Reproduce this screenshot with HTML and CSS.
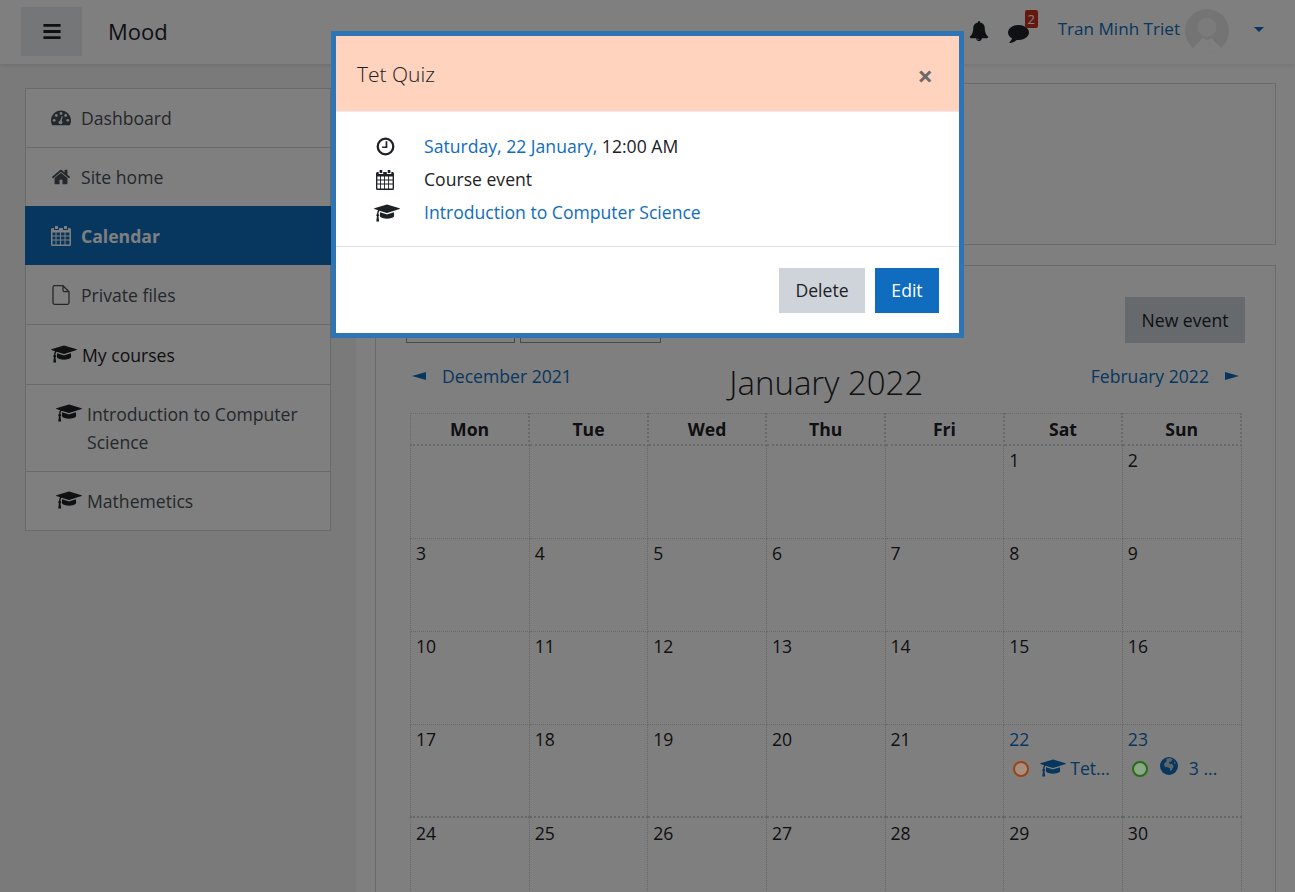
FILE: index.html
```html
<!DOCTYPE html>
<html lang="en">
<head>
<meta charset="utf-8">
<title>Calendar</title>
<link rel="stylesheet" href="styles.css">
</head>
<body>
<svg class="defs" width="0" height="0" aria-hidden="true">
  <symbol id="cap" viewBox="0 0 2304 1792"><path d="M1774 836l18 316q4 69-82 128t-235 93.5-323 34.5-323-34.5-235-93.5-82-128l18-316 574 181q22 7 48 7t48-7zm530-324q0 23-22 31l-1120 352q-4 1-10 1t-10-1l-652-206q-43 34-71 111.5t-34 178.5q63 36 63 109 0 69-58 107l58 433q2 14-8 25-9 11-24 11h-192q-15 0-24-11-10-11-8-25l58-433q-58-38-58-107 0-73 65-111 11-207 98-330l-333-104q-22-8-22-31t22-31l1120-352q4-1 10-1t10 1l1120 352q22 8 22 31z"/></symbol>
  <symbol id="cal" viewBox="0 0 20 20" preserveAspectRatio="none"><path fill-rule="evenodd" d="M4 0h3v3H4zM13 0h3v3h-3zM2 2h1v2h5V2h4v2h5V2h1.500A1.500 1.500 0 0 1 20 3.500v15a1.500 1.500 0 0 1-1.500 1.500h-17A1.500 1.500 0 0 1 0 18.500v-15A1.500 1.500 0 0 1 1.500 2zM1.500 6.500v3h3v-3zM5.500 6.500v3h3.500v-3zM10 6.500v3h3.500v-3zM14.500 6.500v3h4v-3zM1.500 10.500v3h3v-3zM5.500 10.500v3h3.500v-3zM10 10.500v3h3.500v-3zM14.500 10.500v3h4v-3zM1.500 14.500v4h3v-4zM5.500 14.500v4h3.500v-4zM10 14.500v4h3.500v-4zM14.500 14.500v4h4v-4z"/></symbol>
</svg>

<header class="topbar">
  <button class="burger" type="button" aria-label="Menu">
    <svg class="burger-ico" viewBox="0 0 16 14"><path d="M0 0h16v2.600H0zM0 5.700h16v2.600H0zM0 11.400h16V14H0z"/></svg>
  </button>
  <span class="brand">Mood</span>
  <div class="usernav">
    <svg class="ico-bell" viewBox="0 0 1792 1792"><path d="M912 1696q0-16-16-16-59 0-101.500-42.500t-42.500-101.500q0-16-16-16t-16 16q0 73 51.500 124.500t124.500 51.500q16 0 16-16zm816-288q0 52-38 90t-90 38h-448q0 106-75 181t-181 75-181-75-75-181h-448q-52 0-90-38t-38-90q50-42 91-88t85-119.500 74.500-158.500 50-206 19.500-260q0-152 117-282.500t307-158.500q-8-19-8-39 0-40 28-68t68-28 68 28 28 68q0 20-8 39 190 28 307 158.500t117 282.500q0 139 19.500 260t50 206 74.500 158.500 85 119.500 91 88z"/></svg>
    <span class="msg">
      <svg class="ico-msg" viewBox="0 0 1792 1792"><path d="M1792 896q0 174-120 321.500t-326 233-450 85.500q-70 0-145-8-198 175-460 242-49 14-114 22-17 2-30.500-9t-17.500-29v-1q-3-4-.5-12t2-10 4.500-9.500l6-9 7-8.500 8-9q7-8 31-34.500t34.500-38 31-39.500 32.500-51 27-59 26-76q-157-89-247.500-220t-90.500-281q0-130 71-248.500t191-204.500 286-136.500 348-50.500q244 0 450 85.500t326 233 120 321.500z"/></svg>
      <span class="badge">2</span>
    </span>
    <a class="username">Tran Minh Triet</a>
    <svg class="avatar" viewBox="0 0 44 44"><clipPath id="av"><circle cx="22" cy="22" r="22"/></clipPath><g clip-path="url(#av)"><rect width="44" height="44" fill="#e8e8e8"/><circle cx="22" cy="18" r="9.500" fill="#f6f6f6"/><path fill="#fff" d="M0 44V39h8c3-4 7-6 9-10l5 2 5-2c2 4 6 6 9 10h8v5z"/></g></svg>
    <span class="caret"></span>
  </div>
</header>

<div class="page">
  <aside class="side">
    <nav class="menu">
      <a class="item">
        <svg class="mi" viewBox="0 0 20 20"><path d="M10 2.500C4.500 2.500 0 7 0 12.500c0 1.700.4 3.300 1.200 4.800h17.600c.8-1.500 1.200-3.100 1.200-4.800 0-5.500-4.500-10-10-10z"/><g fill="#f4f4f4"><circle cx="3.200" cy="12.300" r="1.400"/><circle cx="5.300" cy="7.500" r="1.400"/><circle cx="10" cy="5.500" r="1.400"/><circle cx="14.700" cy="7.500" r="1.400"/><circle cx="16.800" cy="12.300" r="1.400"/><circle cx="9.500" cy="14.300" r="1.900"/><path d="M9 13l1.800-5 1 .4-1.300 5z"/></g></svg>
        <span>Dashboard</span>
      </a>
      <a class="item">
        <svg class="mi" viewBox="0 0 1792 1792"><path d="M1472 992v480q0 26-19 45t-45 19h-384v-384h-256v384h-384q-26 0-45-19t-19-45v-480q0-1 .5-3t.5-3l575-474 575 474q1 2 1 6zm223-69l-62 74q-8 9-21 11h-3q-13 0-21-7l-692-577-692 577q-12 8-24 7-13-2-21-11l-62-74q-8-10-7-23.500t11-21.500l719-599q32-26 76-26t76 26l244 204v-195q0-14 9-23t23-9h192q14 0 23 9t9 23v408l219 182q10 8 11 21.500t-7 23.500z"/></svg>
        <span>Site home</span>
      </a>
      <a class="item active">
        <svg class="mi"><use href="#cal"/></svg>
        <span>Calendar</span>
      </a>
      <a class="item tall">
        <svg class="mi" viewBox="0 0 20 20"><path fill="none" stroke="currentColor" stroke-width="1.300" d="M12 .7H3.500A1.500 1.500 0 0 0 2 2.200v15.600a1.500 1.500 0 0 0 1.500 1.500h13a1.500 1.500 0 0 0 1.500-1.500V6.700zM12 .7v4.500a1.500 1.500 0 0 0 1.500 1.500H18"/></svg>
        <span>Private files</span>
      </a>
      <a class="item tall dark">
        <svg class="mi cap"><use href="#cap"/></svg>
        <span>My courses</span>
      </a>
      <a class="item sub">
        <svg class="mi cap"><use href="#cap"/></svg>
        <span>Introduction to Computer Science</span>
      </a>
      <a class="item sub">
        <svg class="mi cap"><use href="#cap"/></svg>
        <span>Mathemetics</span>
      </a>
    </nav>
  </aside>

  <main class="main">
    <section class="card summary"></section>
    <section class="card cal">
      <div class="toolbar">
        <div class="selects">
          <span class="sel sel-a"></span>
          <span class="sel sel-b"></span>
        </div>
        <span class="newbtn">New event</span>
      </div>
      <div class="calnav">
        <a class="prev"><span class="tri tri-l"></span>December 2021</a>
        <h2 class="month">January 2022</h2>
        <a class="next">February 2022<span class="tri tri-r"></span></a>
      </div>
      <table class="grid">
        <thead><tr><th>Mon</th><th>Tue</th><th>Wed</th><th>Thu</th><th>Fri</th><th>Sat</th><th>Sun</th></tr></thead>
        <tbody>
          <tr><td></td><td></td><td></td><td></td><td></td><td>1</td><td>2</td></tr>
          <tr><td>3</td><td>4</td><td>5</td><td>6</td><td>7</td><td>8</td><td>9</td></tr>
          <tr><td>10</td><td>11</td><td>12</td><td>13</td><td>14</td><td>15</td><td>16</td></tr>
          <tr><td>17</td><td>18</td><td>19</td><td>20</td><td>21</td>
            <td><a class="day">22</a>
              <div class="ev"><span class="dot dot-o"></span><svg class="evi"><use href="#cap"/></svg><a>Tet...</a></div>
            </td>
            <td><a class="day">23</a>
              <div class="ev"><span class="dot dot-g"></span><svg class="evg" viewBox="0 0 20 20"><circle cx="10" cy="10" r="10"/><path fill="#b9cad9" d="M7 2l4.500-1 2.500 1.500-1.500 2.500-2.500.5 1 2.500 2.500-.5 1.500 3-1.500 3.500-2 2-.5-3.500-2.500-1-3-.5-1-2.500 1-2.500 2-1.500zM15.500 4.500l2 2.500-1.500 1z"/></svg><a>3 ...</a></div>
            </td></tr>
          <tr><td>24</td><td>25</td><td>26</td><td>27</td><td>28</td><td>29</td><td>30</td></tr>
        </tbody>
      </table>
    </section>
  </main>
</div>

<div class="backdrop">
  <div class="modal">
    <div class="m-head">
      <h3 class="m-title">Tet Quiz</h3>
      <span class="m-close">×</span>
    </div>
    <div class="m-body">
      <div class="row">
        <svg class="ri ri-clock" viewBox="0 0 20 20"><circle cx="10" cy="10" r="8.200" fill="none" stroke="currentColor" stroke-width="2.400"/><path fill="none" stroke="currentColor" stroke-width="1.800" d="M11 4.500v6.300H6.500"/></svg>
        <span><a>Saturday, 22 January,</a> 12:00 AM</span>
      </div>
      <div class="row">
        <svg class="ri ri-cal"><use href="#cal"/></svg>
        <span>Course event</span>
      </div>
      <div class="row">
        <svg class="ri ri-cap"><use href="#cap"/></svg>
        <a>Introduction to Computer Science</a>
      </div>
    </div>
    <div class="m-foot">
      <span class="btn btn-del">Delete</span>
      <span class="btn btn-edit">Edit</span>
    </div>
  </div>
</div>
</body>
</html>
```
FILE: styles.css
```css
* { box-sizing: border-box; }
html, body { margin: 0; height: 892px; overflow: hidden; }
body {
  background: #fff;
  color: #1d2125;
  font-family: "Open Sans", "Liberation Sans", sans-serif;
  font-size: 17.6px;
  line-height: 1.5;
}
.defs { display: block; height: 0; }
a { color: #0f6cbf; }

.topbar {
  display: flex;
  align-items: center;
  height: 64px;
  padding: 7px 31px 7px 21px;
  background: #fff;
  box-shadow: 0 2px 4px rgba(0,0,0,.08);
  position: relative;
}
.burger {
  width: 61px;
  height: 49px;
  margin-bottom: 1px;
  border: 0;
  background: #e9ecef;
  display: flex;
  align-items: center;
  justify-content: center;
  padding: 0;
}
.burger-ico { width: 18px; height: 15px; fill: #1d2125; }
.brand { margin: 0 0 2px 26px; font-size: 22px; font-weight: 400; }
.usernav { margin-left: auto; display: flex; align-items: center; margin-top: -2px; }
.ico-bell { width: 20px; height: 20px; fill: #1d2125; }
.msg { position: relative; display: flex; margin-left: 19px; }
.ico-msg { width: 21px; height: 21px; fill: #1d2125; margin-top: 3px; }
.badge {
  position: absolute;
  top: -9px;
  right: -9px;
  width: 13px;
  height: 18px;
  background: #ca3120;
  color: #fff;
  font-size: 13px;
  line-height: 18px;
  text-align: center;
  border-radius: 2px;
}
.username { margin-left: 29px; margin-bottom: 4px; font-size: 17.1px; }
.avatar { width: 44px; height: 44px; margin-left: 5px; }
.caret {
  margin-left: 25px;
  margin-top: -4px;
  border-top: 5px solid #0f6cbf;
  border-left: 5px solid transparent;
  border-right: 5px solid transparent;
}

.page { display: flex; }
.side { width: 356px; flex: none; background: #f4f4f4; padding: 24px 25px 0; min-height: 828px; }
.menu { display: block; width: 306px; background: #fff; border: 1px solid #d5d5d5; }
.item {
  display: flex;
  gap: 8px;
  padding: 15px 25px 14px;
  line-height: 29px;
  color: #495057;
  border-bottom: 1px solid #d5d5d5;
}
.item:last-child { border-bottom: 0; }
.item.tall { padding-top: 16px; }
.item.dark { color: #1d2125; }
.item.sub { padding-left: 30px; line-height: 28px; padding-top: 15px; padding-bottom: 15px; }
.item.active {
  margin: -1px -1px 0;
  background: #0f6cbf;
  color: #fff;
  font-weight: 700;
  padding: 16px 25px 14px 26px;
  border-bottom: 0;
}
.mi { width: 20px; height: 20px; flex: none; fill: currentColor; margin: 4px 2px 0 0; }
.mi.cap { width: 26px; height: 20px; margin-right: -3px; margin-left: 0; margin-top: 3px; }
.item.dark .mi.cap, .item.sub .mi.cap { fill: #1d2125; }

.main { flex: 1; padding: 19px 19px 0; min-width: 0; }
.card { border: 1px solid #d5d5d5; background: #fff; }
.summary { height: 162px; margin-bottom: 20px; }
.cal { padding: 31px 30px 0; }
.toolbar { display: flex; justify-content: space-between; align-items: flex-end; height: 46px; }
.selects { display: flex; gap: 5px; }
.sel { display: block; height: 30px; border: 1px solid #8f959e; }
.sel-a { width: 109px; }
.sel-b { width: 141px; }
.newbtn {
  width: 120px;
  height: 46px;
  background: #ced4da;
  color: #1d2125;
  display: flex;
  align-items: center;
  justify-content: center;
}
.calnav {
  display: flex;
  justify-content: space-between;
  align-items: flex-start;
  height: 70px;
  padding: 20px 6px 0 6px;
}
.prev, .next { display: flex; align-items: center; gap: 16px; line-height: 26px; }
.tri { width: 0; height: 0; border-top: 4px solid transparent; border-bottom: 4px solid transparent; }
.tri-l { border-right: 14px solid #0f6cbf; }
.tri-r { border-left: 14px solid #0f6cbf; }
.month { margin: -5px 10px 0 0; font-size: 33px; font-weight: 300; line-height: 50px; color: #1d2125; }
.grid { width: 832px; margin-left: 4px; border-collapse: collapse; table-layout: fixed; }
.grid th {
  height: 31px;
  font-weight: 700;
  font-size: 17.6px;
  line-height: 30px;
  padding: 0;
  border: 2px dotted #d4d4d4;
  border-top-width: 1px;
  border-left-width: 1px;
}
.grid td {
  height: 93px;
  vertical-align: top;
  padding: 1px 5px 2px;
  border: 1px dotted #cfcfcf;
  line-height: 26px;
  white-space: nowrap;
  overflow: hidden;
}
.grid tr:nth-child(5) td { border-top-width: 2px; padding-top: 2px; }
.day { display: block; }
.ev { display: flex; align-items: center; height: 26px; margin-top: 3px; padding-left: 4px; }
.ev a { font-size: 17.6px; }
.dot {
  position: relative;
  z-index: 1;
  width: 16px;
  height: 16px;
  border-radius: 50%;
  border: 2.500px solid;
  flex: none;
  margin-top: 3px;
}
.dot-o { border-color: #9c4410; background: #a58f83; }
.dot-g { border-color: #2a6a18; background: #8aa885; }
.evi { width: 26px; height: 20px; fill: #0f6cbf; margin: 0 4px 0 11px; flex: none; }
.evg { width: 18px; height: 18px; fill: #0f6cbf; margin: -3px 11px 0 12px; flex: none; }

.backdrop {
  position: fixed;
  inset: 0;
  background: rgba(0,0,0,.5);
  display: flex;
  flex-direction: column;
  align-items: center;
  padding-top: 31px;
}
.modal { width: 633px; height: 307px; border: 5px solid #2f75b5; background: #fff; display: flex; flex-direction: column; }
.m-head {
  height: 76px;
  background: #ffd3bd;
  display: flex;
  align-items: center;
  justify-content: space-between;
  padding: 0 26px 0 21px;
  border-bottom: 1px solid #e9ecef;
}
.m-title { margin: 2px 0 0; font-size: 21px; font-weight: 300; color: #1d2125; }
.m-close { font-size: 27px; font-weight: 700; color: #6a6a6a; line-height: 1; margin-top: 3px; }
.m-body {
  height: 135px;
  padding: 18px 0 0 38px;
  border-bottom: 1px solid #dee2e6;
}
.row { display: flex; align-items: center; height: 33px; color: #1d2125; }
.ri { flex: none; fill: currentColor; }
.ri-clock { width: 19px; height: 19px; margin-left: 2px; margin-right: 29px; }
.ri-cal { width: 18px; height: 20px; margin-left: 2px; margin-right: 30px; }
.ri-cap { width: 26px; height: 20px; margin-right: 24px; }
.m-foot { flex: 1; display: flex; justify-content: flex-end; align-items: flex-start; gap: 10px; padding: 21px 20px 0 0; }
.btn { height: 45px; display: flex; align-items: center; justify-content: center; }
.btn-del { width: 86px; background: #ced4da; color: #1d2125; }
.btn-edit { width: 64px; background: #0f6cbf; color: #fff; }
```
